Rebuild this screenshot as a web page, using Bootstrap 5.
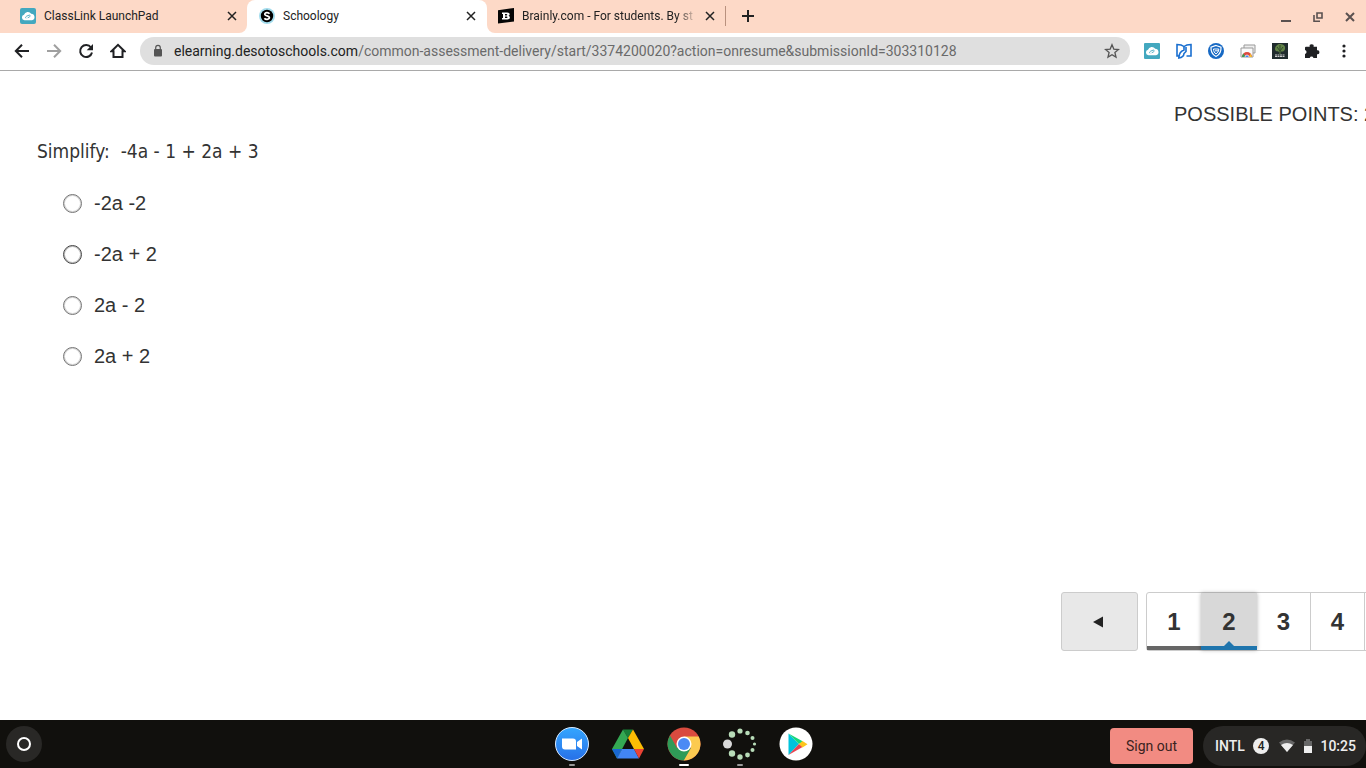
<!DOCTYPE html>
<html lang="en">
<head>
<meta charset="utf-8">
<meta name="viewport" content="width=device-width, initial-scale=1">
<title>Schoology</title>
<link href="https://cdn.jsdelivr.net/npm/bootstrap@5.3.0/dist/css/bootstrap.min.css" rel="stylesheet">
<style>
  body { font-family: "Liberation Sans", Arial, sans-serif; color: #333; background: #fff; }
  svg { display: block; flex: none; }
  button { border: 0; padding: 0; background: none; color: inherit; }
  .browser, .shelf { font-family: Roboto, sans-serif; }
  .strip { height: 33px; font-size: 12px; line-height: 16px; color: #222; background: #fff; }
  .peach { background: #fdd9c7; }
  .tab-a { width: 247px; padding: 0 8px 2px 20px; border-bottom-right-radius: 8px; }
  .tab-wrap { width: 240px; background: linear-gradient(#fdd9c7 50%, #fff 50%); }
  .tab-b { background: #fff; border-radius: 8px 8px 0 0; padding: 0 9px 2px 12px; }
  .tab-rest { border-bottom-left-radius: 8px; padding: 0 0 2px 11px; }
  .tab-c { width: 219px; }
  .fade-title { width: 175px; overflow: hidden; -webkit-mask-image: linear-gradient(90deg, #000 155px, transparent); mask-image: linear-gradient(90deg, #000 155px, transparent); }
  .tab-line { width: 1px; height: 20px; background: #b9917e; margin: 0 15px 0 8px; }
  .win { gap: 16px; padding: 2px 8px 0 0; }
  .tools { height: 38px; padding: 0 14px 2px; border-bottom: 1px solid #a9a9a9; gap: 16px; }
  .omni { height: 28px; border-radius: 14px; background: #dfdfdf; margin-left: -2px; padding: 0 10px; gap: 8px; font-size: 14px; }
  .url { color: #6a6a6a; text-decoration: none; line-height: 20px; white-space: nowrap; overflow: hidden; }
  .url span { color: #222; }
  .exts { gap: 16px; margin-left: -2px; }
  .quiz { padding: 31px 0 65px; overflow: hidden; }
  .points { width: 192px; font-size: 20px; line-height: 24px; white-space: nowrap; overflow: hidden; }
  .question { font-family: "DejaVu Sans Condensed", "DejaVu Sans", sans-serif; font-stretch: condensed; font-size: 19px; line-height: 26px; margin: 12px 37px 0; white-space: pre-wrap; }
  .answers { margin: 27px 63px 0; gap: 27px; font-size: 20px; line-height: 24px; }
  .answers label { gap: 12px; }
  .answers input { appearance: none; width: 19px; height: 19px; margin: 0; border: 1px solid #747474; border-radius: 50%; background: #fff; box-shadow: inset 0 0 0 1px #d4d4d4; }
  .answers .dark { border-color: #444; box-shadow: inset 0 0 0 1px #bbb; }
  .pager { width: 305px; gap: 8px; overflow: hidden; padding: 4px 0; }
  .prev { width: 77px; height: 59px; flex: none; background: #e8e8e8; border: 1px solid #ccc; border-radius: 3px; padding-right: 4px; }
  .pages { border: 1px solid #ccc; border-radius: 3px; height: 59px; flex: none; }
  .pages button { width: 54px; height: 57px; border-right: 1px solid #ccc; font-size: 24px; font-weight: 700; line-height: 30px; position: relative; }
  .pages .seen { border-right: 0; border-bottom: 4px solid #666; padding-top: 4px; }
  .pages .now { width: 56px; background: #d8d8d8; border-right: 0; border-bottom: 4px solid #1f75ad; padding-top: 4px; box-shadow: 0 0 4px rgba(0,0,0,.3); }
  .now::after { content: ""; position: absolute; left: 50%; bottom: 0; margin-left: -5px; border: 5px solid transparent; border-top: 0; border-bottom-color: #1f75ad; }
  .shelf { height: 48px; background: #11100d; color: #eee; font-size: 14px; line-height: 20px; }
  .side { flex: 1 1 0; }
  .launcher { width: 36px; height: 36px; margin-left: 6px; border-radius: 50%; background: #292826; display: grid; place-items: center; }
  .apps { gap: 22px; padding-left: 2px; }
  .app { width: 34px; height: 48px; padding-top: 7px; display: flex; flex-direction: column; align-items: center; }
  .run-mark { width: 6px; height: 2px; background: #999; margin-top: 3px; border-radius: 1px; }
  .run-mark.on { width: 10px; background: #fff; }
  .signout { width: 83px; height: 36px; margin: 6px 10px 0 0; border-radius: 4px; background: #f28b82; color: #3a2220; }
  .tray { width: 163px; height: 40px; margin-top: 4px; border-radius: 20px; background: #282725; padding: 0 10px 0 12px; font-weight: 500; white-space: nowrap; }
  .count { width: 16px; height: 16px; border-radius: 50%; background: #eee; color: #222; font-size: 12px; line-height: 16px; text-align: center; }
</style>
</head>
<body class="d-flex flex-column vh-100 overflow-hidden">
<header class="browser">
  <div class="strip d-flex">
    <div class="tab-a peach d-flex align-items-center">
      <svg width="16" height="16" viewBox="0 0 16 16"><rect width="16" height="16" rx="2" fill="#43a8bf"/><path d="M4.500 12.300a2.800 2.800 0 0 1-.5-5.500 4 4 0 0 1 7.200-1A3.300 3.300 0 0 1 12 12.300z" fill="#fff"/><path d="M6 10.300c-1-1 .2-2 1-2.300l2-.8c1.400-.5 1.600 1.200.3 1.800l-1.600.8" fill="none" stroke="#43a8bf" stroke-width=".9"/></svg>
      <span class="ms-2 me-auto">ClassLink LaunchPad</span>
      <button aria-label="Close tab"><svg width="14" height="14" viewBox="0 0 14 14"><path d="M3 3l8 8M11 3l-8 8" stroke="#222" stroke-width="1.500"/></svg></button>
    </div>
    <div class="tab-wrap d-flex"><div class="tab-b flex-fill d-flex align-items-center">
      <svg width="16" height="16" viewBox="0 0 16 16"><circle cx="8" cy="8" r="8" fill="#a2dced"/><circle cx="8" cy="8" r="6.200" fill="#000"/><path d="M10.500 5.800C9.500 4.200 5.600 4.300 5.800 6.300s4.600 1.200 4.600 3.300-3.900 2.300-5 .6" fill="none" stroke="#fff" stroke-width="1.700"/></svg>
      <span class="ms-2 me-auto">Schoology</span>
      <button aria-label="Close tab"><svg width="14" height="14" viewBox="0 0 14 14"><path d="M3 3l8 8M11 3l-8 8" stroke="#222" stroke-width="1.500"/></svg></button>
    </div></div>
    <div class="tab-rest peach flex-fill d-flex align-items-center">
      <div class="tab-c d-flex align-items-center">
        <svg width="16" height="16" viewBox="0 0 16 16"><path d="M0 2.200L16 0v13.600L0 15.600z" fill="#050505"/><path d="M4 4.500h5.200c3 0 3 2.900 1.200 3.300 2.300.5 1.900 3.700-1 3.700H4V10h1V6H4zM7 6v1.400h1.500c1 0 1-1.400 0-1.400zM7 8.600V10h1.700c1 0 1-1.400 0-1.400z" fill="#fff" fill-rule="evenodd"/></svg>
        <span class="fade-title ms-2 me-auto text-nowrap">Brainly.com - For students. By st</span>
        <button aria-label="Close tab"><svg width="14" height="14" viewBox="0 0 14 14"><path d="M3 3l8 8M11 3l-8 8" stroke="#222" stroke-width="1.500"/></svg></button>
      </div>
      <span class="tab-line"></span>
      <button aria-label="New tab"><svg width="14" height="14" viewBox="0 0 14 14"><path d="M7 1v12M1 7h12" stroke="#222" stroke-width="2"/></svg></button>
      <div class="win d-flex ms-auto">
        <button aria-label="Minimize"><svg width="16" height="16" viewBox="0 0 16 16"><path d="M3 12h10" stroke="#5a5150" stroke-width="2"/></svg></button>
        <button aria-label="Restore"><svg width="16" height="16" viewBox="0 0 16 16" fill="none" stroke="#5a5150" stroke-width="1.600"><path d="M7 4h5v5H7zM4 6v6.200h6"/></svg></button>
        <button aria-label="Close window"><svg width="16" height="16" viewBox="0 0 16 16"><path d="M4 4l8 8M12 4l-8 8" stroke="#5a5150" stroke-width="2"/></svg></button>
      </div>
    </div>
  </div>
  <div class="tools d-flex align-items-center">
    <button aria-label="Back"><svg width="16" height="16" viewBox="0 0 16 16"><path d="M15 8H2M8 1.700L1.800 8 8 14.300" fill="none" stroke="#202124" stroke-width="2"/></svg></button>
    <button aria-label="Forward"><svg width="16" height="16" viewBox="0 0 16 16"><path d="M1 8h13M8 1.700L14.200 8 8 14.300" fill="none" stroke="#a0a0a0" stroke-width="2"/></svg></button>
    <button aria-label="Reload"><svg width="16" height="16" viewBox="0 0 16 16"><path d="M13 4.500A6 6 0 1 0 14 9.500" fill="none" stroke="#202124" stroke-width="2"/><path d="M15 1v6.300H8.700z" fill="#202124"/></svg></button>
    <button aria-label="Home"><svg width="16" height="16" viewBox="0 0 16 16"><path d="M1.500 8.200L8 1.800l6.500 6.400h-2V14h-9V8.200z" fill="none" stroke="#202124" stroke-width="2"/></svg></button>
    <div class="omni flex-fill d-flex align-items-center">
      <svg width="16" height="16" viewBox="0 0 16 16"><path d="M5 6h6a1 1 0 0 1 1 1v5.500a1 1 0 0 1-1 1H5a1 1 0 0 1-1-1V7a1 1 0 0 1 1-1z" fill="#555"/><path d="M5.700 7V4.700a2.300 2.300 0 0 1 4.600 0V7" fill="none" stroke="#555" stroke-width="1.200"/></svg>
      <a class="url me-auto" href="#"><span>elearning.desotoschools.com</span>/common-assessment-delivery/start/3374200020?action=onresume&amp;submissionId=303310128</a>
      <button aria-label="Bookmark"><svg width="16" height="16" viewBox="0 0 16 16"><path d="M8 1.800l1.800 4.300 4.700.4-3.600 3 1.100 4.600L8 11.700 4 14.100l1.100-4.600-3.600-3 4.700-.4z" fill="none" stroke="#555" stroke-width="1.300"/></svg></button>
    </div>
    <div class="exts d-flex align-items-center">
      <svg width="16" height="16" viewBox="0 0 16 16"><rect width="16" height="16" rx="1" fill="#43a8bf"/><path d="M4.500 12.300a2.800 2.800 0 0 1-.5-5.500 4 4 0 0 1 7.200-1A3.300 3.300 0 0 1 12 12.300z" fill="#fff"/><path d="M6 10.300c-1-1 .2-2 1-2.300l2-.8c1.400-.5 1.600 1.200.3 1.800l-1.600.8" fill="none" stroke="#43a8bf" stroke-width=".9"/></svg>
      <svg width="16" height="16" viewBox="0 0 16 16" fill="none" stroke="#1a6fd0" stroke-width="1.600"><path d="M3 13H1V1.500c3 0 5 .3 7 2 2-1.700 4-2 7-2V13h-4.500"/><path d="M8 3.500V7c-3 1-5 3.500-5.200 8 3-.4 5-1.700 5.200-4.500l2-2V4"/></svg>
      <svg width="16" height="16" viewBox="0 0 16 16"><circle cx="8" cy="8" r="8" fill="#1769c4"/><path d="M8 2.500l5 1.800c.3 4.200-1.500 7.500-5 9.200-3.500-1.700-5.300-5-5-9.200z" fill="none" stroke="#fff" stroke-width="1.200"/><path d="M5.500 6h5.300c0 2.300-1 3.800-2.800 4.800C6.400 9.900 5.600 8.400 5.500 6zM7 7.800h4" fill="none" stroke="#fff"/></svg>
      <svg width="16" height="16" viewBox="0 0 16 16"><path d="M4 2h11v8H4z" fill="#eee" stroke="#999"/><path d="M1 5h12v9H1z" fill="#fafafa" stroke="#999"/><path d="M2 14a5 5 0 0 1 10 0" fill="#dd4b3e"/><path d="M2 14a5 5 0 0 1 1.500-3.500L5.500 14z" fill="#389e55"/><path d="M12 14l-1.500-3.500L9 14z" fill="#f4c430"/><path d="M5 14a2 2 0 0 1 4 0" fill="#4285f4" stroke="#fff" stroke-width=".7"/></svg>
      <svg width="16" height="16" viewBox="0 0 16 16"><path d="M0 0h16v16H0z" fill="#202c2e"/><path d="M3 6c0-3 3-5 5-5s6 1 5 5-4 2-4.500 2.500V11h-1V9C6 8 3 9 3 6z" fill="#628348"/><path d="M5 4l3 4 3-4M8 2v8" stroke="#304b2b" fill="none"/><path d="M3 12h10M3 13.500h10" stroke="#ccc" stroke-dasharray="2 .5"/></svg>
      <svg width="16" height="16" viewBox="0 0 16 16"><path d="M2 3.800h3.700a2 2 0 1 1 3.900 0H13v3.500a2 2 0 1 1 0 3.900V15H9.500a2 2 0 0 0-3.800 0H1v-4a2 2 0 0 0 0-3.900V4.800a1 1 0 0 1 1-1z" fill="#202124"/></svg>
      <button aria-label="Menu"><svg width="16" height="16" viewBox="0 0 16 16" fill="#202124"><circle cx="8" cy="3" r="1.600"/><circle cx="8" cy="8" r="1.600"/><circle cx="8" cy="13" r="1.600"/></svg></button>
    </div>
  </div>
</header>

<main class="quiz flex-fill d-flex flex-column">
  <div class="points ms-auto">POSSIBLE POINTS: 2</div>
  <p class="question">Simplify:&nbsp; -4a - 1 + 2a + 3</p>
  <form class="answers d-flex flex-column">
    <label class="d-flex align-items-center"><input type="radio" name="answer">-2a -2</label>
    <label class="d-flex align-items-center"><input type="radio" name="answer" class="dark">-2a + 2</label>
    <label class="d-flex align-items-center"><input type="radio" name="answer">2a - 2</label>
    <label class="d-flex align-items-center"><input type="radio" name="answer">2a + 2</label>
  </form>
  <nav class="pager d-flex ms-auto mt-auto" aria-label="Questions">
    <button class="prev d-flex align-items-center justify-content-center" aria-label="Previous"><svg width="12" height="12" viewBox="0 0 12 12"><path d="M11 .5v11L1 6z" fill="#222"/></svg></button>
    <div class="pages d-flex">
      <button class="seen">1</button><button class="now">2</button><button>3</button><button>4</button><button aria-label="Next"></button>
    </div>
  </nav>
</main>

<footer class="shelf d-flex align-items-center">
  <div class="side"><button class="launcher" aria-label="Launcher"><svg width="16" height="16" viewBox="0 0 16 16"><circle cx="8" cy="8" r="6" fill="none" stroke="#fff" stroke-width="2"/></svg></button></div>
  <div class="apps d-flex">
    <button class="app" aria-label="Zoom"><svg width="34" height="34" viewBox="0 0 34 34"><defs><linearGradient id="zoomBlue" x2="0" y2="1"><stop stop-color="#34a6ff"/><stop offset="1" stop-color="#2770e8"/></linearGradient></defs><circle cx="17" cy="17" r="16.500" fill="url(#zoomBlue)" stroke="#d9eaff"/><path d="M7 11.500h11a3 3 0 0 1 3 3v8H10a3 3 0 0 1-3-3zM22 15l5-3.500v11L22 19z" fill="#fff"/></svg><span class="run-mark"></span></button>
    <button class="app" aria-label="Drive"><svg width="34" height="34" viewBox="0 0 34 34"><path d="M12 2.500h10L17 11z" fill="#188038"/><path d="M12 2.500L1 22l5 9.500L17 11z" fill="#34a853"/><path d="M22 2.500L33 22H23L17 11z" fill="#fbbc04"/><path d="M1 22h10l-5 9.500z" fill="#1967d2"/><path d="M11 22h12l5 9.500H6z" fill="#4285f4"/><path d="M23 22h10l-5 9.500z" fill="#ea4335"/></svg></button>
    <button class="app" aria-label="Chrome"><svg width="34" height="34" viewBox="0 0 34 34"><circle cx="17" cy="17" r="16.500" fill="#d94b3f"/><path d="M3 8.500A16.500 16.500 0 0 0 17 33.500l7-12L17 17l-7 4z" fill="#2f9b57"/><path d="M17 9.500h14.700A16.500 16.500 0 0 1 16.800 33.500L24 21z" fill="#fcca50"/><circle cx="17" cy="17" r="7.500" fill="#fff"/><circle cx="17" cy="17" r="6" fill="#4a8af4"/></svg><span class="run-mark on"></span></button>
    <button class="app" aria-label="Loading app"><svg width="34" height="34" viewBox="0 0 34 34" fill="#b8dcb8"><circle cx="17" cy="4" r="2.600"/><circle cx="24.500" cy="6" r="2.300"/><circle cx="29.500" cy="11" r="2"/><circle cx="31.500" cy="17" r="1.600"/><circle cx="29.500" cy="23" r="2"/><circle cx="24.500" cy="28" r="2.400"/><circle cx="17" cy="30" r="2.700"/><circle cx="9" cy="26.500" r="3.200"/><circle cx="9" cy="7.500" r="3.200"/><circle cx="4.500" cy="17" r="4.500" fill="#d9d9d9"/></svg><span class="run-mark"></span></button>
    <button class="app" aria-label="Play"><svg width="34" height="34" viewBox="0 0 34 34"><circle cx="17" cy="17" r="16.500" fill="#fff"/><path d="M9.500 6.500L20 17 9.500 28z" fill="#00c3dc"/><path d="M9.500 6.500L24 14.500 20 17z" fill="#16d77b"/><path d="M9.500 28L24 19.800 20 17z" fill="#e94350"/><path d="M23.500 14l5 3.200-5 3.200L20 17z" fill="#fdc51c"/></svg></button>
  </div>
  <div class="side d-flex justify-content-end">
    <button class="signout">Sign out</button>
    <div class="tray d-flex align-items-center justify-content-between">
      <span>INTL</span><span class="count">4</span>
      <svg width="18" height="16" viewBox="0 0 18 16"><path d="M1 4.500Q9-1.500 17 4.500L9 14z" fill="#666"/><path d="M3 7Q9 3 15 7l-6 7z" fill="#eee"/></svg>
      <svg width="8" height="16" viewBox="0 0 8 16"><path d="M2 1h4v2h2v12H0V3h2z" fill="#666"/><path d="M0 8h8v7H0z" fill="#eee"/></svg>
      <span>10:25</span>
    </div>
  </div>
</footer>
<script src="https://cdn.jsdelivr.net/npm/bootstrap@5.3.0/dist/js/bootstrap.bundle.min.js"></script>
</body>
</html>
